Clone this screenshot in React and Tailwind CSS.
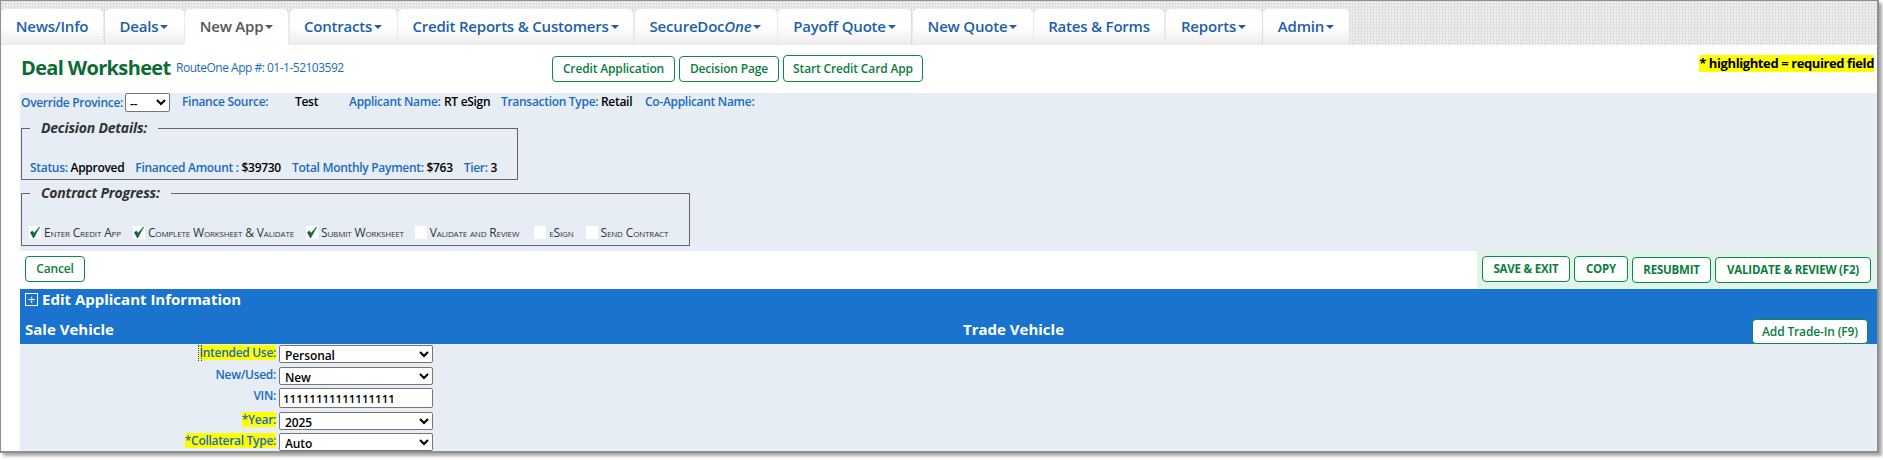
const tabs = [
  { label: 'News/Info', w: 'w-[102px]' },
  { label: 'Deals', w: 'w-[79px]', caret: true },
  { label: 'New App', w: 'w-[103px]', caret: true, active: true },
  { label: 'Contracts', w: 'w-[107px]', caret: true },
  { label: 'Credit Reports & Customers', w: 'w-[235px]', caret: true },
  { label: 'SecureDoc', italic: 'One', w: 'w-[142px]', caret: true },
  { label: 'Payoff Quote', w: 'w-[133px]', caret: true },
  { label: 'New Quote', w: 'w-[120px]', caret: true },
  { label: 'Rates & Forms', w: 'w-[130px]' },
  { label: 'Reports', w: 'w-[96px]', caret: true },
  { label: 'Admin', w: 'w-[86px]', caret: true },
]

const steps = [
  { label: 'Enter Credit App', done: true, ml: 'ml-[7px]' },
  { label: 'Complete Worksheet & Validate', done: true, ml: 'ml-[12px]' },
  { label: 'Submit Worksheet', done: true, ml: 'ml-[12px]' },
  { label: 'Validate and Review', ml: 'ml-[11px]' },
  { label: 'eSign', ml: 'ml-[15px]' },
  { label: 'Send Contract', ml: 'ml-[12px]' },
]

function Tab({ tab }) {
  return (
    <div
      className={`${tab.w} h-[36px] pb-[2px] rounded-t-[5px] flex items-center justify-center text-[15px] tracking-[-0.2px] font-semibold ${
        tab.active ? 'bg-white text-[#555555]' : 'bg-gradient-to-b from-white from-50% to-[#ececec] text-[#1b5fa8]'
      }`}
    >
      <span>{tab.label}</span>
      {tab.italic && <span className="italic">{tab.italic}</span>}
      {tab.caret && <span className="ml-[2px] mt-[2px] border-x-[4px] border-t-[4px] border-x-transparent border-t-current" />}
    </div>
  )
}

function Btn({ children, className, text = 'text-[12px] tracking-[-0.15px] font-semibold', h = 'h-[26px]' }) {
  return (
    <button
      type="button"
      className={`${h} ${text} rounded-[4px] border border-[#0a8a45] bg-white text-[#0a7d40] flex items-center justify-center ${className}`}
    >
      {children}
    </button>
  )
}

function Label({ children }) {
  return <span className="text-[#1a6bbd] font-semibold">{children}</span>
}

function Value({ children }) {
  return <span className="text-black font-semibold">{children}</span>
}

function Step({ step }) {
  return (
    <div className={`flex items-end ${step.ml}`}>
      <span className="w-[12px] h-[13px] bg-white flex items-center justify-center mb-[1px]">
        {step.done && (
          <svg width="12" height="13" viewBox="0 0 12 13">
            <path d="M1.5 6.5 L4.5 12 L10.5 1 L5 7.5 L3.5 5 Z" fill="#0b6b35" stroke="#0b6b35" strokeWidth="0.8" />
          </svg>
        )}
      </span>
      <span className="ml-[3px] text-[12px] tracking-[-0.15px] leading-[14px] text-[#333333] [font-variant:small-caps]">{step.label}</span>
    </div>
  )
}

function FormRow({ label, req, h, children }) {
  return (
    <div className={`flex items-start ${h}`}>
      <div className="w-[256px] flex justify-end">
        <span className={`text-[12px] tracking-[-0.3px] leading-[15px] font-semibold text-[#1a6bbd] ${req ? 'bg-[#ffff00]' : ''}`}>{label}</span>
      </div>
      <div className="ml-[3px] w-[154px]">{children}</div>
    </div>
  )
}

function Select({ value }) {
  return (
    <select
      defaultValue={value}
      className="block w-[154px] h-[18px] border border-[#767676] rounded-[2px] bg-white text-[12px] tracking-[-0.1px] leading-none font-semibold text-black pl-[1px]"
    >
      <option>{value}</option>
    </select>
  )
}

const capsBtn = 'text-[11.5px] tracking-[-0.2px] font-bold'

export default function App() {
  return (
    <div className="w-[1883px] h-[460px] bg-white overflow-hidden font-['Open_Sans',sans-serif]">
      <div className="w-[1879px] h-[453px] border-t border-l border-r-2 border-b-2 border-[#8f8f8f] shadow-[3px_3px_3px_rgba(0,0,0,0.35)] flex flex-col">
        {/* top menu */}
        <div className="h-[44px] pt-[8px] flex gap-[1.5px] bg-[repeating-conic-gradient(#dddddd_0_25%,#f1f1f1_0_50%)] bg-[length:3px_3px]">
          {tabs.map((tab) => (
            <Tab key={tab.label} tab={tab} />
          ))}
        </div>

        {/* page title */}
        <div className="h-[48px] flex items-start">
          <h1 className="ml-[20px] w-[155px] mt-[10px] text-[20px] tracking-[-0.65px] leading-[26px] font-bold text-[#0b6b35] whitespace-nowrap">Deal Worksheet</h1>
          <span className="w-[376px] mt-[14px] text-[12px] tracking-[-0.5px] leading-[18px] text-[#1a6bbd] whitespace-nowrap">RouteOne App #: 01-1-52103592</span>
          <div className="mt-[11px] flex gap-[4px]">
            <Btn className="w-[123px]">Credit Application</Btn>
            <Btn className="w-[100px]">Decision Page</Btn>
            <Btn className="w-[140px] -mt-[1px]" h="h-[27px]">Start Credit Card App</Btn>
          </div>
          <span className="ml-auto mr-[3px] mt-[10px] bg-[#ffff00] text-[13px] tracking-[-0.4px] leading-[17px] font-bold text-black">* highlighted = required field</span>
        </div>

        {/* deal details */}
        <div className="ml-[19px] h-[158px] bg-[#e6edf5] text-[12px] tracking-[-0.3px]">
          <div className="h-[26px] flex items-start whitespace-nowrap leading-[16px]">
            <div className="w-[162px] pl-[1px] flex items-start">
              <span className="mt-[1px] text-[#1a6bbd] font-semibold leading-[16px] pt-[1px]">Override Province:</span>
              <select defaultValue="--" className="ml-[2px] w-[45px] h-[19px] border border-[#767676] rounded-[2px] bg-white text-[12px] font-semibold text-black">
                <option>--</option>
              </select>
            </div>
            <div className="flex pt-[1px]">
              <span className="w-[113px]"><Label>Finance Source:</Label></span>
              <span className="w-[54px]"><Value>Test</Value></span>
              <span className="w-[95px]"><Label>Applicant Name:</Label></span>
              <span className="w-[57px]"><Value>RT eSign</Value></span>
              <span className="w-[100px]"><Label>Transaction Type:</Label></span>
              <span className="w-[44px]"><Value>Retail</Value></span>
              <span><Label>Co-Applicant Name:</Label></span>
            </div>
          </div>

          <fieldset className="ml-[1px] w-[497px] h-[61px] border border-[#666666] flex flex-col">
            <legend className="ml-[8px] px-[11px] text-[14px] tracking-[-0.2px] leading-[18px] italic font-bold text-[#333333]">Decision Details:</legend>
            <div className="mt-[23px] ml-[8px] whitespace-nowrap leading-[16px]">
              <Label>Status:</Label> <Value>Approved</Value>
              <span className="ml-[11px]"><Label>Financed Amount :</Label></span> <Value>$39730</Value>
              <span className="ml-[11px]"><Label>Total Monthly Payment:</Label></span> <Value>$763</Value>
              <span className="ml-[11px]"><Label>Tier:</Label></span> <Value>3</Value>
            </div>
          </fieldset>

          <fieldset className="ml-[1px] mt-[4px] w-[669px] h-[62px] border border-[#666666]">
            <legend className="ml-[8px] px-[11px] text-[14px] tracking-[-0.2px] leading-[18px] italic font-bold text-[#333333]">Contract Progress:</legend>
            <div className="mt-[24px] flex whitespace-nowrap">
              {steps.map((step) => (
                <Step key={step.label} step={step} />
              ))}
            </div>
          </fieldset>
        </div>

        {/* action buttons */}
        <div className="h-[38px] flex">
          <Btn className="ml-[24px] mt-[5px] w-[60px]">Cancel</Btn>
          <div className="ml-auto w-[400px] bg-[#e0f5e8] rounded-bl-[4px] pl-[5px] pt-[5px] flex gap-[4px]">
            <Btn className="w-[88px]" text={capsBtn}>SAVE &amp; EXIT</Btn>
            <Btn className="w-[54px]" text={capsBtn}>COPY</Btn>
            <Btn className="w-[79px] mt-[1px]" text={capsBtn}>RESUBMIT</Btn>
            <Btn className="w-[156px] mt-[1px]" text={capsBtn}>VALIDATE &amp; REVIEW (F2)</Btn>
          </div>
        </div>

        {/* blue section headers */}
        <div className="ml-[19px] h-[55px] bg-[#1a73cc] text-white font-bold text-[15px]">
          <div className="h-[20px] pl-[5px] flex items-center">
            <span className="w-[13px] h-[13px] border border-white flex items-center justify-center text-[13px] leading-none font-normal">+</span>
            <span className="ml-[4px]">Edit Applicant Information</span>
          </div>
          <div className="h-[35px] flex items-start">
            <span className="ml-[5px] mt-[9px] w-[938px] leading-[22px]">Sale Vehicle</span>
            <span className="mt-[9px] leading-[22px]">Trade Vehicle</span>
            <Btn className="ml-auto mr-[9px] mt-[10px] w-[116px]" h="h-[25px]">Add Trade-In (F9)</Btn>
          </div>
        </div>

        {/* form */}
        <div className="ml-[19px] flex-1 bg-[#e6edf5] pt-[1px] relative overflow-hidden">
          <FormRow label="Intended Use:" req h="h-[22px]"><Select value="Personal" /></FormRow>
          <FormRow label="New/Used:" h="h-[21px]"><Select value="New" /></FormRow>
          <FormRow label="VIN:" h="h-[24px]">
            <input
              readOnly
              value="11111111111111111"
              className="block w-[154px] h-[20px] border border-[#767676] rounded-[2px] bg-white text-[11.5px] font-semibold text-black pl-[3px]"
            />
          </FormRow>
          <FormRow label="*Year:" req h="h-[21px]"><Select value="2025" /></FormRow>
          <FormRow label="*Collateral Type:" req h="h-[20px]"><Select value="Auto" /></FormRow>
          <span className="absolute left-[178px] top-[1px] w-[4px] h-[16px] border-l border-r border-dotted border-[#1b3f8f]" />
        </div>
      </div>
    </div>
  )
}
